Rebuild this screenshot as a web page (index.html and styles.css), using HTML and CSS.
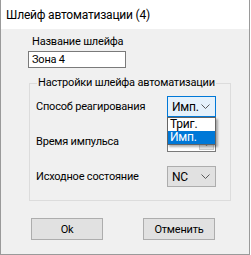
FILE: index.html
```html
<!DOCTYPE html>
<html lang="ru">
<head>
  <meta charset="UTF-8">
  <meta name="viewport" content="width=device-width, initial-scale=1.0">
  <title>Шлейф автоматизации</title>
  <link rel="stylesheet" href="styles.css">
</head>
<body>
  <div class="window">
    <div class="titlebar">Шлейф автоматизации (4)</div>

    <div class="content">
      <div class="name-box">
        <label for="loopName">Название шлейфа</label>
        <input type="text" id="loopName" value="Зона 4">
      </div>

      <fieldset class="group">
        <legend>Настройки шлейфа автоматизации</legend>

        <div class="row">
          <span class="row-label">Способ реагирования</span>
          <div class="combo combo-focus">
            <span>Имп.</span>
            <svg class="chevron" width="9" height="6" viewBox="0 0 9 6"><polyline points="0.5,0.5 4.5,4.5 8.5,0.5" fill="none" stroke="#5a5a5a" stroke-width="1"/></svg>
          </div>
          <ul class="droplist">
            <li>Триг.</li>
            <li class="selected">Имп.</li>
          </ul>
        </div>

        <div class="row">
          <span class="row-label">Время импульса</span>
          <div class="combo combo-edit">
            <span></span>
            <span class="combo-btn">&#9662;</span>
          </div>
        </div>

        <div class="row">
          <span class="row-label">Исходное состояние</span>
          <div class="combo">
            <span>NC</span>
            <svg class="chevron" width="9" height="6" viewBox="0 0 9 6"><polyline points="0.5,0.5 4.5,4.5 8.5,0.5" fill="none" stroke="#5a5a5a" stroke-width="1"/></svg>
          </div>
        </div>
      </fieldset>

      <div class="buttons">
        <button class="btn">Ok</button>
        <button class="btn">Отменить</button>
      </div>
    </div>
  </div>
</body>
</html>
```

FILE: styles.css
```css
body {
  margin: 0;
  background-color: #ffffff;
  font-family: Roboto, 'Liberation Sans', sans-serif;
  font-size: 11px;
  letter-spacing: -0.2px;
  color: #000000;
}

.window {
  width: 250px;
  height: 255px;
  box-sizing: border-box;
  border: 1px solid #9a9a9a;
  border-top: none;
  background-color: #f0f0f0;
  display: flex;
  flex-direction: column;
}

.titlebar {
  height: 29px;
  line-height: 30px;
  padding-left: 5px;
  background-color: #ffffff;
  font-size: 12px;
}

.content {
  display: flex;
  flex-direction: column;
  padding: 0 0 0 27px;
}

.name-box {
  display: flex;
  flex-direction: column;
  padding-top: 6px;
}

.name-box label {
  padding-left: 4px;
  height: 14px;
  line-height: 14px;
}

.name-box input {
  margin-top: 2px;
  width: 98px;
  height: 17px;
  box-sizing: border-box;
  border: 1px solid #7a7a7a;
  padding: 0 3px;
  font-family: inherit;
  font-size: 11px;
  letter-spacing: -0.2px;
  background-color: #ffffff;
  color: #000000;
  outline: none;
}

.group {
  margin: 8px 0 0 1px;
  width: 202px;
  box-sizing: border-box;
  border: 1px solid #dcdcdc;
  padding: 6px 0 13px 6px;
  display: flex;
  flex-direction: column;
  gap: 14px;
}

.group legend {
  padding: 0 1px;
  margin-left: 1px;
  line-height: 14px;
  white-space: nowrap;
}

.row {
  position: relative;
  display: flex;
  align-items: center;
  height: 21px;
}

.row-label {
  width: 131px;
}

.combo {
  width: 49px;
  height: 21px;
  box-sizing: border-box;
  border: 1px solid #adadad;
  background-color: #e1e1e1;
  display: flex;
  align-items: center;
  justify-content: space-between;
  padding: 0 5px 0 4px;
  font-size: 12px;
}

.combo-focus {
  border-color: #0078d7;
  background-color: #e5f1fb;
}

.combo-edit {
  height: 20px;
  background-color: #ffffff;
  border-color: #7a7a7a;
  padding: 0 1px 0 3px;
}

.combo-btn {
  width: 15px;
  height: 16px;
  background-color: #e6e6e6;
  border: 1px solid #c8c8c8;
  box-sizing: border-box;
  font-size: 10px;
  line-height: 15px;
  text-align: center;
}

.chevron {
  display: block;
}

.droplist {
  position: absolute;
  left: 131px;
  top: 21px;
  width: 49px;
  box-sizing: border-box;
  margin: 0;
  padding: 0;
  list-style: none;
  background-color: #ffffff;
  border: 1px solid #646464;
  box-shadow: 2px 2px 2px rgba(0, 0, 0, 0.3);
  font-size: 12px;
  z-index: 2;
}

.droplist li {
  height: 13px;
  line-height: 13px;
  padding-left: 2px;
}

.droplist li.selected {
  background-color: #0078d7;
  color: #ffffff;
}

.buttons {
  display: flex;
  gap: 40px;
  margin-top: 17px;
  padding-left: 3px;
}

.btn {
  width: 72px;
  height: 22px;
  border: 1px solid #adadad;
  background-color: #e1e1e1;
  font-family: inherit;
  font-size: 11px;
  letter-spacing: -0.2px;
  color: #000000;
  padding: 0;
}
```
